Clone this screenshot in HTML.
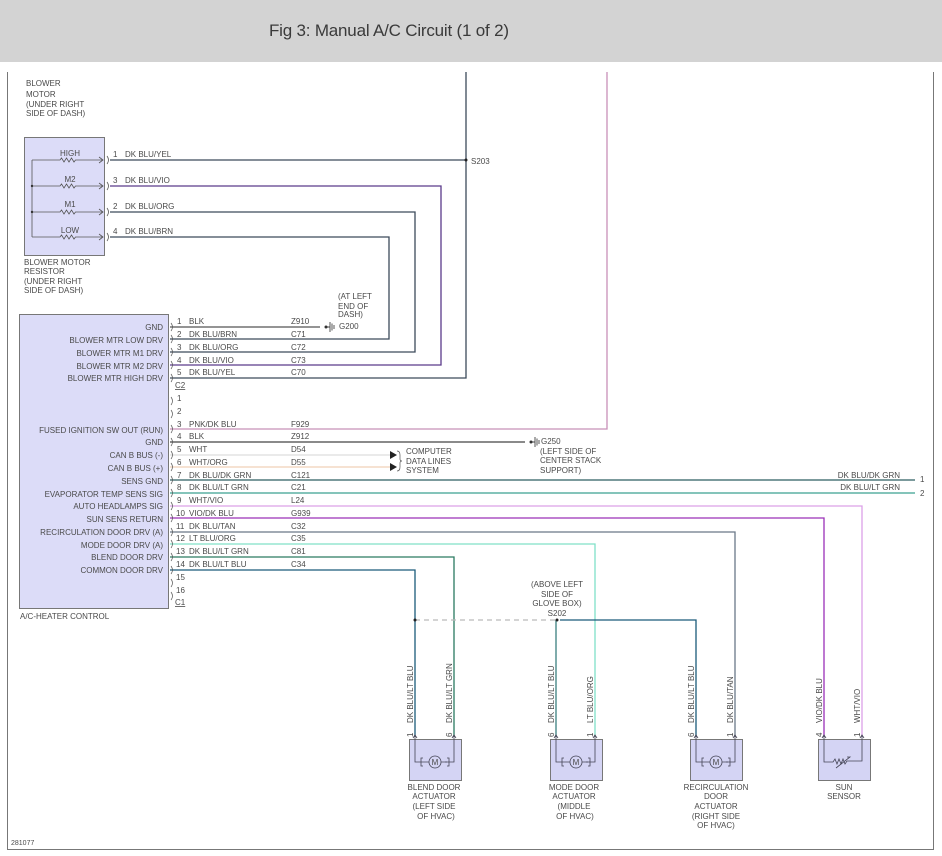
<!DOCTYPE html>
<html><head><meta charset="utf-8"><style>
html,body{margin:0;padding:0;background:#fff;}
body{width:942px;height:856px;overflow:hidden;position:relative;font-family:"Liberation Sans",sans-serif;}
#hdr{position:absolute;left:0;top:0;width:942px;height:62px;background:#d3d3d3;}
#hdr span{position:absolute;left:269px;top:21px;font-size:17px;color:#3a3a3a;letter-spacing:-0.2px;}
svg{position:absolute;left:0;top:0;}
svg text{font-family:"Liberation Sans",sans-serif;font-size:8px;fill:#4a4a4a;}
</style></head><body>
<div id="hdr"><span>Fig 3: Manual A/C Circuit (1 of 2)</span></div>
<svg width="942" height="856" viewBox="0 0 942 856">
<path d="M7.5,72 V849.5 H933.5 V72" fill="none" stroke="#777" stroke-width="1"/>
<text x="26" y="86">BLOWER</text>
<text x="26" y="97">MOTOR</text>
<text x="26" y="107">(UNDER RIGHT</text>
<text x="26" y="116">SIDE OF DASH)</text>

<rect x="24.5" y="137.5" width="80" height="118" fill="#dcdcf8" stroke="#777"/>
<text x="70" y="156" text-anchor="middle">HIGH</text>
<text x="70" y="182" text-anchor="middle">M2</text>
<text x="70" y="207" text-anchor="middle">M1</text>
<text x="70" y="233" text-anchor="middle">LOW</text>
<g fill="none" stroke="#555" stroke-width="0.8">
<path d="M32,160 V237"/>
<path d="M32,160 H60 l1.5,-2 l2.5,4 l2.5,-4 l2.5,4 l2.5,-4 l2.5,4 l1.5,-2 H103 M99,157 l4,3 l-4,3"/>
<path d="M32,186 H60 l1.5,-2 l2.5,4 l2.5,-4 l2.5,4 l2.5,-4 l2.5,4 l1.5,-2 H103 M99,183 l4,3 l-4,3"/>
<path d="M32,212 H60 l1.5,-2 l2.5,4 l2.5,-4 l2.5,4 l2.5,-4 l2.5,4 l1.5,-2 H103 M99,209 l4,3 l-4,3"/>
<path d="M32,237 H60 l1.5,-2 l2.5,4 l2.5,-4 l2.5,4 l2.5,-4 l2.5,4 l1.5,-2 H103 M99,234 l4,3 l-4,3"/>
<path d="M107,156 q3,4 0,8 M107,182 q3,4 0,8 M107,208 q3,4 0,8 M107,233 q3,4 0,8"/>
</g>
<circle cx="32" cy="186" r="1.2" fill="#333"/><circle cx="32" cy="212" r="1.2" fill="#333"/>
<text x="24" y="265">BLOWER MOTOR</text>
<text x="24" y="274">RESISTOR</text>
<text x="24" y="284">(UNDER RIGHT</text>
<text x="24" y="293">SIDE OF DASH)</text>

<g fill="none" stroke-width="1.3">
<path d="M110,160 H466" stroke="#3c4a5a"/>
<path d="M466,72 V378 H170" stroke="#3c4a5a"/>
<path d="M110,186 H441 V365 H170" stroke="#5a3a8a"/>
<path d="M110,212 H415 V352 H170" stroke="#3c4a5a"/>
<path d="M110,237 H389 V339 H170" stroke="#3c4a5a"/>
<path d="M170,327 H320" stroke="#555"/>
<path d="M607,72 V429 H170" stroke="#c890b8"/>
<path d="M170,442 H525" stroke="#444"/>
<path d="M170,455 H392" stroke="#ddd"/>
<path d="M170,467 H392" stroke="#f0d0b8"/>
<path d="M170,480 H915" stroke="#2c5e60"/>
<path d="M170,493 H915" stroke="#3aa090"/>
<path d="M170,506 H862 V737" stroke="#dca0e8"/>
<path d="M170,518 H824 V737" stroke="#9a30b8"/>
<path d="M170,532 H735 V737" stroke="#6a7888"/>
<path d="M170,544 H595 V737" stroke="#80e0c8"/>
<path d="M170,557 H454 V737" stroke="#2a7a60"/>
<path d="M170,570 H415 V737" stroke="#1a5a7a"/>
<path d="M560,620 H696 V737" stroke="#1a5a7a"/>
<path d="M556,620 V737" stroke="#3a8080"/>
<path d="M415,620 H557" stroke="#bbb" stroke-dasharray="5,4"/>
</g>
<circle cx="466" cy="160" r="1.5" fill="#222"/>
<text x="471" y="164">S203</text>
<circle cx="415" cy="620" r="1.5" fill="#222"/>
<circle cx="557" cy="620" r="1.5" fill="#222"/>
<text x="557" y="587" text-anchor="middle">(ABOVE LEFT</text>
<text x="557" y="597" text-anchor="middle">SIDE OF</text>
<text x="557" y="606" text-anchor="middle">GLOVE BOX)</text>
<text x="557" y="616" text-anchor="middle">S202</text>

<g stroke="#444" stroke-width="0.9" fill="none">
<path d="M326,327 H330 M330,322 V332 M332,323.5 V330.5 M334,325 V329"/>
<path d="M531,442 H535 M535,437 V447 M537,438.5 V445.5 M539,440 V444"/>
</g>
<circle cx="326" cy="327" r="1.5" fill="#333"/><circle cx="531" cy="442" r="1.5" fill="#333"/>
<text x="338" y="299">(AT LEFT</text>
<text x="338" y="309">END OF</text>
<text x="338" y="317">DASH)</text>
<text x="339" y="329">G200</text>
<text x="541" y="444">G250</text>
<text x="540" y="454">(LEFT SIDE OF</text>
<text x="540" y="463">CENTER STACK</text>
<text x="540" y="473">SUPPORT)</text>

<path d="M390,451 L397,455 L390,459Z M390,463 L397,467 L390,471Z" fill="#222"/>
<path d="M397,451 q3,0 3,4 v4 q0,2 2,2 q-2,0 -2,2 v4 q0,4 -3,4" fill="none" stroke="#555" stroke-width="0.7"/>
<text x="406" y="454">COMPUTER</text>
<text x="406" y="464">DATA LINES</text>
<text x="406" y="473">SYSTEM</text>

<text x="900" y="478" text-anchor="end">DK BLU/DK GRN</text>
<text x="900" y="490" text-anchor="end">DK BLU/LT GRN</text>
<text x="920" y="482">1</text>
<text x="920" y="496">2</text>

<rect x="19.5" y="314.5" width="149" height="294" fill="#dcdcf8" stroke="#777"/>
<g text-anchor="end">
<text x="163" y="330">GND</text>
<text x="163" y="343">BLOWER MTR LOW DRV</text>
<text x="163" y="356">BLOWER MTR M1 DRV</text>
<text x="163" y="369">BLOWER MTR M2 DRV</text>
<text x="163" y="381">BLOWER MTR HIGH DRV</text>
<text x="163" y="433">FUSED IGNITION SW OUT (RUN)</text>
<text x="163" y="445">GND</text>
<text x="163" y="458">CAN B BUS (-)</text>
<text x="163" y="471">CAN B BUS (+)</text>
<text x="163" y="484">SENS GND</text>
<text x="163" y="497">EVAPORATOR TEMP SENS SIG</text>
<text x="163" y="509">AUTO HEADLAMPS SIG</text>
<text x="163" y="522">SUN SENS RETURN</text>
<text x="163" y="535">RECIRCULATION DOOR DRV (A)</text>
<text x="163" y="548">MODE DOOR DRV (A)</text>
<text x="163" y="560">BLEND DOOR DRV</text>
<text x="163" y="573">COMMON DOOR DRV</text>
</g>
<g fill="none" stroke="#555" stroke-width="0.7">
<path d="M171,323 q3,4 0,8 M171,335 q3,4 0,8 M171,348 q3,4 0,8 M171,361 q3,4 0,8 M171,374 q3,4 0,8
M171,397 q3,4 0,8 M171,410 q3,4 0,8 M171,425 q3,4 0,8 M171,438 q3,4 0,8 M171,451 q3,4 0,8 M171,463 q3,4 0,8 M171,476 q3,4 0,8 M171,489 q3,4 0,8 M171,502 q3,4 0,8 M171,514 q3,4 0,8 M171,528 q3,4 0,8 M171,540 q3,4 0,8 M171,553 q3,4 0,8 M171,566 q3,4 0,8 M171,579 q3,4 0,8 M171,592 q3,4 0,8"/>
</g>
<g>
<text x="177" y="324">1</text><text x="189" y="324">BLK</text><text x="291" y="324">Z910</text>
<text x="177" y="337">2</text><text x="189" y="337">DK BLU/BRN</text><text x="291" y="337">C71</text>
<text x="177" y="350">3</text><text x="189" y="350">DK BLU/ORG</text><text x="291" y="350">C72</text>
<text x="177" y="363">4</text><text x="189" y="363">DK BLU/VIO</text><text x="291" y="363">C73</text>
<text x="177" y="375">5</text><text x="189" y="375">DK BLU/YEL</text><text x="291" y="375">C70</text>
<text x="175" y="388" text-decoration="underline">C2</text>
<text x="177" y="401">1</text>
<text x="177" y="414">2</text>
<text x="177" y="427">3</text><text x="189" y="427">PNK/DK BLU</text><text x="291" y="427">F929</text>
<text x="177" y="439">4</text><text x="189" y="439">BLK</text><text x="291" y="439">Z912</text>
<text x="177" y="452">5</text><text x="189" y="452">WHT</text><text x="291" y="452">D54</text>
<text x="177" y="465">6</text><text x="189" y="465">WHT/ORG</text><text x="291" y="465">D55</text>
<text x="177" y="478">7</text><text x="189" y="478">DK BLU/DK GRN</text><text x="291" y="478">C121</text>
<text x="177" y="490">8</text><text x="189" y="490">DK BLU/LT GRN</text><text x="291" y="490">C21</text>
<text x="177" y="503">9</text><text x="189" y="503">WHT/VIO</text><text x="291" y="503">L24</text>
<text x="176" y="516">10</text><text x="189" y="516">VIO/DK BLU</text><text x="291" y="516">G939</text>
<text x="176" y="529">11</text><text x="189" y="529">DK BLU/TAN</text><text x="291" y="529">C32</text>
<text x="176" y="541">12</text><text x="189" y="541">LT BLU/ORG</text><text x="291" y="541">C35</text>
<text x="176" y="554">13</text><text x="189" y="554">DK BLU/LT GRN</text><text x="291" y="554">C81</text>
<text x="176" y="567">14</text><text x="189" y="567">DK BLU/LT BLU</text><text x="291" y="567">C34</text>
<text x="176" y="580">15</text>
<text x="176" y="593">16</text>
<text x="175" y="605" text-decoration="underline">C1</text>
</g>
<text x="20" y="619">A/C-HEATER CONTROL</text>
<g>
<text x="113" y="157">1</text><text x="125" y="157">DK BLU/YEL</text>
<text x="113" y="183">3</text><text x="125" y="183">DK BLU/VIO</text>
<text x="113" y="209">2</text><text x="125" y="209">DK BLU/ORG</text>
<text x="113" y="234">4</text><text x="125" y="234">DK BLU/BRN</text>
</g>

<g>
<text transform="translate(413,723) rotate(-90)">DK BLU/LT BLU</text>
<text transform="translate(452,723) rotate(-90)">DK BLU/LT GRN</text>
<text transform="translate(554,723) rotate(-90)">DK BLU/LT BLU</text>
<text transform="translate(593,723) rotate(-90)">LT BLU/ORG</text>
<text transform="translate(694,723) rotate(-90)">DK BLU/LT BLU</text>
<text transform="translate(733,723) rotate(-90)">DK BLU/TAN</text>
<text transform="translate(822,723) rotate(-90)">VIO/DK BLU</text>
<text transform="translate(860,723) rotate(-90)">WHT/VIO</text>
<text transform="translate(413,737) rotate(-90)">1</text>
<text transform="translate(452,737) rotate(-90)">6</text>
<text transform="translate(554,737) rotate(-90)">6</text>
<text transform="translate(593,737) rotate(-90)">1</text>
<text transform="translate(694,737) rotate(-90)">6</text>
<text transform="translate(733,737) rotate(-90)">1</text>
<text transform="translate(822,737) rotate(-90)">4</text>
<text transform="translate(860,737) rotate(-90)">1</text>
</g>

<g fill="#d4d4f4" stroke="#777">
<rect x="409.5" y="739.5" width="52" height="41"/>
<rect x="550.5" y="739.5" width="52" height="41"/>
<rect x="690.5" y="739.5" width="52" height="41"/>
<rect x="818.5" y="739.5" width="52" height="41"/>
</g>
<g fill="none" stroke="#445" stroke-width="0.8">
<path d="M413,738 l2,-3 l2,3 M452,738 l2,-3 l2,3 M415,736 V762 H423 M454,736 V762 H445 M423,758 h-2 v8 h2 M447,758 h2 v8 h-2"/>
<circle cx="435" cy="762" r="6"/><path d="M423,762 h6 M441,762 h6"/>
<path d="M554,738 l2,-3 l2,3 M593,738 l2,-3 l2,3 M556,736 V762 H564 M595,736 V762 H586 M564,758 h-2 v8 h2 M588,758 h2 v8 h-2"/>
<circle cx="576" cy="762" r="6"/><path d="M564,762 h6 M582,762 h6"/>
<path d="M694,738 l2,-3 l2,3 M733,738 l2,-3 l2,3 M696,736 V762 H704 M735,736 V762 H726 M704,758 h-2 v8 h2 M728,758 h2 v8 h-2"/>
<circle cx="716" cy="762" r="6"/><path d="M704,762 h6 M722,762 h6"/>
<path d="M822,738 l2,-3 l2,3 M860,738 l2,-3 l2,3 M824,736 V762 H833 l2,-3 l2,5 l2,-5 l2,5 l2,-5 l2,5 l2,-3 H862 V736 M836,768 l14,-11 l-3,0"/>
</g>
<g>
<text x="435" y="765" text-anchor="middle">M</text>
<text x="576" y="765" text-anchor="middle">M</text>
<text x="716" y="765" text-anchor="middle">M</text>
</g>
<g text-anchor="middle">
<text x="434" y="790">BLEND DOOR</text><text x="434" y="799">ACTUATOR</text><text x="434" y="809">(LEFT SIDE</text><text x="436" y="819">OF HVAC)</text>
<text x="574" y="790">MODE DOOR</text><text x="574" y="799">ACTUATOR</text><text x="574" y="809">(MIDDLE</text><text x="575" y="819">OF HVAC)</text>
<text x="716" y="790">RECIRCULATION</text><text x="716" y="799">DOOR</text><text x="716" y="809">ACTUATOR</text><text x="716" y="819">(RIGHT SIDE</text><text x="716" y="828">OF HVAC)</text>
<text x="844" y="790">SUN</text><text x="844" y="799">SENSOR</text>
</g>
<text x="11" y="845" style="font-size:7px">281077</text>
</svg>
</body></html>
